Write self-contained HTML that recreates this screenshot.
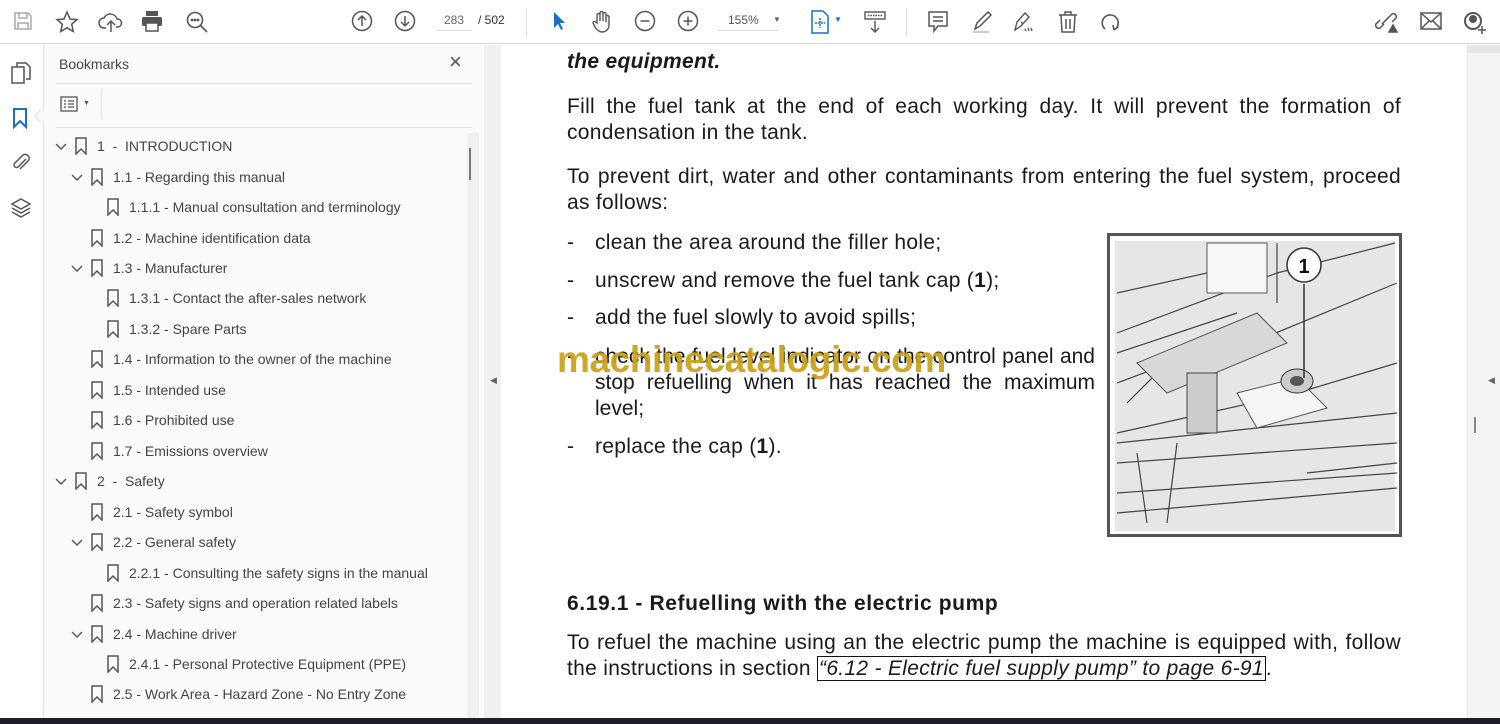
<!DOCTYPE html>
<html><head><meta charset="utf-8"><style>
*{margin:0;padding:0;box-sizing:border-box}
body{width:1500px;height:724px;overflow:hidden;background:#fff;font-family:"Liberation Sans",sans-serif;position:relative}
.tb{position:absolute;left:0;top:0;width:1500px;height:44px;background:#fff;border-bottom:1px solid #d6d6d6}
.ic{position:absolute;top:10px}
.rail{position:absolute;left:0;top:45px;width:44px;height:673px;background:#fff;border-right:1px solid #e2e2e2}
.panel{position:absolute;left:44px;top:45px;width:440px;height:673px;background:#fafafa}
.gap{position:absolute;left:484px;top:45px;width:17px;height:673px;background:#f0f0f0}
.page{position:absolute;left:501px;top:45px;width:966px;height:673px;background:#fff}
.sb{position:absolute;left:1467px;top:45px;width:33px;height:673px;background:#f4f4f4;border-left:1px solid #e6e6e6}
.bottom{position:absolute;left:0;top:718px;width:1500px;height:6px;background:#1e1e2a}
.bm{position:absolute;font-size:14px;color:#444;white-space:nowrap}
.bm svg{position:absolute;left:-23px;top:-1px}
.chev{position:absolute}
.t{position:absolute;left:567px;width:834px;font-size:21px;line-height:26px;color:#1a1a1a;letter-spacing:.3px;white-space:nowrap}
.j{display:block;text-align:justify;text-align-last:justify;white-space:normal}
.li{position:absolute;font-size:21px;line-height:26px;color:#1a1a1a;letter-spacing:.3px}
</style></head><body>
<div class="tb">
<svg class="ic" style="left:12px" width="22" height="22" viewBox="0 0 22 22" fill="none" stroke="#aaa" stroke-width="1.5"><path d="M3 3h13l3 3v13H3z"/><path d="M7 3v5h8V3M6 19v-6h10v6"/></svg>
<svg class="ic" style="left:55px" width="24" height="24" viewBox="0 0 24 24" fill="none" stroke="#555" stroke-width="1.5"><path d="M12 2l3 7 7 .6-5.3 4.6 1.6 7.3L12 17.8 5.7 21.5l1.6-7.3L2 9.6 9 9z"/></svg>
<svg class="ic" style="left:98px" width="26" height="24" viewBox="0 0 26 24" fill="none" stroke="#555" stroke-width="1.5"><path d="M8 18H6a5 5 0 010-10 7 7 0 0113 1 4 4 0 011 8h-2M13 22V11m-4 4l4-4 4 4"/></svg>
<svg class="ic" style="left:141px" width="22" height="22" viewBox="0 0 22 22" fill="#555"><rect x="5" y="1" width="12" height="5"/><rect x="1" y="7" width="20" height="9" rx="2"/><rect x="5" y="13" width="12" height="8" fill="#fff" stroke="#555" stroke-width="1.5"/></svg>
<svg class="ic" style="left:185px" width="24" height="24" viewBox="0 0 24 24" fill="none" stroke="#555" stroke-width="1.6"><circle cx="10" cy="10" r="7.5"/><path d="M15.5 15.5L22 22"/><circle cx="7" cy="10" r=".6" fill="#555"/><circle cx="10" cy="10" r=".6" fill="#555"/><circle cx="13" cy="10" r=".6" fill="#555"/></svg>
<svg class="ic" style="left:351px" width="22" height="22" viewBox="0 0 22 22" fill="none" stroke="#555" stroke-width="1.5"><circle cx="11" cy="11" r="9.5"/><path d="M11 16V6m-4 4l4-4 4 4"/></svg>
<svg class="ic" style="left:394px" width="22" height="22" viewBox="0 0 22 22" fill="none" stroke="#555" stroke-width="1.5"><circle cx="11" cy="11" r="9.5"/><path d="M11 6v10m-4-4l4 4 4-4"/></svg>
<div style="position:absolute;left:436px;top:13px;width:36px;font-size:12px;color:#666;text-align:center;border-bottom:1px solid #ddd;padding-bottom:3px">283</div>
<div style="position:absolute;left:478px;top:13px;font-size:12px;color:#333">/ 502</div>
<div style="position:absolute;left:526px;top:8px;width:1px;height:28px;background:#ddd"></div>
<svg class="ic" style="left:551px" width="16" height="22" viewBox="0 0 16 22"><path d="M3 2v16l4-4 3 6 2-1-3-6h5z" fill="#1a6fc9"/></svg>
<svg class="ic" style="left:590px" width="24" height="24" viewBox="0 0 24 24" fill="none" stroke="#555" stroke-width="1.4"><path d="M7 13V5a1.5 1.5 0 013 0v6V3a1.5 1.5 0 013 0v8V4a1.5 1.5 0 013 0v8V7a1.5 1.5 0 013 0v8c0 4-3 7-7 7-3 0-5-2-7-5l-2-4a1.4 1.4 0 012.5-1z"/></svg>
<svg class="ic" style="left:634px" width="22" height="22" viewBox="0 0 22 22" fill="none" stroke="#555" stroke-width="1.5"><circle cx="11" cy="11" r="9.5"/><path d="M6.5 11h9"/></svg>
<svg class="ic" style="left:677px" width="22" height="22" viewBox="0 0 22 22" fill="none" stroke="#555" stroke-width="1.5"><circle cx="11" cy="11" r="9.5"/><path d="M6.5 11h9M11 6.5v9"/></svg>
<div style="position:absolute;left:718px;top:13px;width:60px;font-size:12px;color:#555;border-bottom:1px solid #ddd;padding-bottom:3px;padding-left:10px">155%</div>
<div style="position:absolute;left:773px;top:15px;font-size:8px;color:#666">▼</div>
<svg class="ic" style="left:810px" width="20" height="24" viewBox="0 0 20 24" fill="none" stroke="#1a6fc9" stroke-width="1.5"><path d="M2 1h11l5 5v17H2z"/><path d="M10 8v10M5 13h10" stroke-dasharray="2 1"/></svg>
<div style="position:absolute;left:834px;top:15px;font-size:8px;color:#1a6fc9">▼</div>
<svg class="ic" style="left:863px" width="24" height="24" viewBox="0 0 24 24" fill="none" stroke="#555" stroke-width="1.4"><rect x="2" y="2" width="20" height="7"/><path d="M5 5.5h14" stroke-dasharray="1.5 1"/><path d="M12 11v11m-4-4l4 4 4-4"/></svg>
<div style="position:absolute;left:906px;top:8px;width:1px;height:28px;background:#ddd"></div>
<svg class="ic" style="left:927px" width="22" height="24" viewBox="0 0 22 24" fill="none" stroke="#555" stroke-width="1.5"><path d="M2 2h18v14h-9l-4 5v-5H2z"/><path d="M6 7h10M6 11h10"/></svg>
<svg class="ic" style="left:970px" width="24" height="24" viewBox="0 0 24 24" fill="none" stroke="#555" stroke-width="1.5"><path d="M5 19l2-6L18 2l3 3L10 16z"/><rect x="3" y="21" width="16" height="2" fill="#ccc" stroke="none"/></svg>
<svg class="ic" style="left:1012px" width="24" height="24" viewBox="0 0 24 24" fill="none" stroke="#555" stroke-width="1.4"><path d="M3 20l2-8 8-9 4 4-8 9zM9 12l2 2M13 19l1 2m2-3l1 3m2-3l1 3"/></svg>
<svg class="ic" style="left:1057px" width="22" height="24" viewBox="0 0 22 24" fill="none" stroke="#555" stroke-width="1.5"><path d="M2 5h18M8 5V2h6v3M4 5l1 17h12l1-17M9 9v10M13 9v10"/></svg>
<svg class="ic" style="left:1098px" width="24" height="24" viewBox="0 0 24 24" fill="none" stroke="#555" stroke-width="1.6"><path d="M16 20a8 8 0 10-9-1M16 20l-1-5m1 5l4-3"/></svg>
<svg class="ic" style="left:1374px" width="26" height="24" viewBox="0 0 26 24" fill="none" stroke="#555" stroke-width="1.5"><path d="M10 14l-4 4a3 3 0 01-4-4l4-4M14 8l4-4a3 3 0 014 4l-4 4M8 14l6-6"/><path d="M15 22l4-7 4 7z" fill="#555"/></svg>
<svg class="ic" style="left:1419px" width="24" height="22" viewBox="0 0 24 22" fill="none" stroke="#555" stroke-width="1.5"><rect x="2" y="3" width="20" height="16"/><path d="M2 3l10 9 10-9M2 19l8-8m12 8l-8-8"/></svg>
<svg class="ic" style="left:1462px" width="26" height="26" viewBox="0 0 26 26" fill="none" stroke="#555" stroke-width="2"><circle cx="11" cy="11" r="8"/><circle cx="11" cy="9" r="3" fill="#555"/><path d="M20 16v8M16 20h8" stroke-width="1.5"/></svg>
</div>

<div class="rail">
<svg style="position:absolute;left:10px;top:16px" width="22" height="24" viewBox="0 0 22 24" fill="none" stroke="#555" stroke-width="1.5"><path d="M7 6V2h9l4 4v12h-4M2 6h12v16H2z"/></svg>
<svg style="position:absolute;left:12px;top:62px" width="16" height="22" viewBox="0 0 16 22" fill="none" stroke="#1a6fc9" stroke-width="2"><path d="M2 2h12v18l-6-6-6 6z"/></svg>
<div style="position:absolute;left:36px;top:66px;width:10px;height:10px;background:#fafafa;border-left:1px solid #e2e2e2;border-bottom:1px solid #e2e2e2;transform:rotate(45deg)"></div>
<svg style="position:absolute;left:10px;top:106px" width="22" height="24" viewBox="0 0 22 24" fill="none" stroke="#555" stroke-width="1.5"><path d="M16 8l-8 8a2.5 2.5 0 01-3.5-3.5L13 4a4 4 0 015.5 5.5L10 18"/></svg>
<svg style="position:absolute;left:10px;top:152px" width="22" height="22" viewBox="0 0 22 22" fill="none" stroke="#555" stroke-width="1.5"><path d="M11 2l9 5-9 5-9-5zM2 11l9 5 9-5M2 15l9 5 9-5"/></svg>
</div>

<div class="panel">
<div style="position:absolute;left:15px;top:11px;font-size:14px;color:#444">Bookmarks</div>
<div style="position:absolute;left:405px;top:4px;font-size:22px;color:#555">×</div>
<div style="position:absolute;left:12px;top:38px;width:416px;height:1px;background:#e0e0e0"></div>
<svg style="position:absolute;left:16px;top:51px" width="18" height="16" viewBox="0 0 18 16" fill="none" stroke="#555" stroke-width="1.3"><rect x="1" y="1" width="16" height="14"/><path d="M4 5h2M8 5h6M4 8h2M8 8h6M4 11h2M8 11h6"/></svg>
<div style="position:absolute;left:39px;top:55px;font-size:7px;color:#555">▼</div>
<div style="position:absolute;left:57px;top:44px;width:1px;height:30px;background:#ddd"></div>
<div style="position:absolute;left:12px;top:82px;width:416px;height:1px;background:#e0e0e0"></div>
<div style="position:absolute;left:423px;top:88px;width:12px;height:585px;background:#f0f0f0"></div>
<div style="position:absolute;left:425px;top:103px;width:2px;height:32px;background:#777"></div>
</div>
<div class="gap"><div style="position:absolute;left:6px;top:330px;font-size:9px;color:#666">◀</div></div>

<div class="page"></div>
<div class="t" style="top:49px;font-weight:bold;font-style:italic">the equipment.</div>
<div class="t" style="top:94px"><span class="j">Fill the fuel tank at the end of each working day. It will prevent the formation of</span>condensation in the tank.</div>
<div class="t" style="top:164px"><span class="j">To prevent dirt, water and other contaminants from entering the fuel system, proceed</span>as follows:</div>
<div class="li" style="left:567px;top:230px">-</div><div class="li" style="left:595px;top:230px">clean the area around the filler hole;</div>
<div class="li" style="left:567px;top:268px">-</div><div class="li" style="left:595px;top:268px">unscrew and remove the fuel tank cap (<b>1</b>);</div>
<div class="li" style="left:567px;top:305px">-</div><div class="li" style="left:595px;top:305px">add the fuel slowly to avoid spills;</div>
<div class="li" style="left:567px;top:344px">-</div><div class="li" style="left:595px;top:344px;width:500px;text-align:justify;text-align-last:left;letter-spacing:0">check the fuel level indicator on the control panel and stop refuelling when it has reached the maximum level;</div>
<div class="li" style="left:567px;top:434px">-</div><div class="li" style="left:595px;top:434px">replace the cap (<b>1</b>).</div>
<div style="position:absolute;left:557px;top:339px;font-size:37px;font-weight:bold;color:#c9a018;opacity:.92;white-space:nowrap;letter-spacing:-.4px">machinecatalogic.com</div>
<div class="li" style="left:567px;top:591px;font-weight:bold;font-size:21px;letter-spacing:.6px">6.19.1 - Refuelling with the electric pump</div>
<div class="t" style="top:630px"><span class="j">To refuel the machine using an the electric pump the machine is equipped with, follow</span>the instructions in section <i style="border:1px solid #111;padding:0 1px">“6.12 - Electric fuel supply pump” to page 6-91</i>.</div>

<svg style="position:absolute;left:1107px;top:233px" width="295" height="304" viewBox="0 0 295 304">
<rect x="1.5" y="1.5" width="292" height="301" fill="#fff" stroke="#555" stroke-width="3"/>
<rect x="8" y="8" width="280" height="290" fill="#e6e6e6"/>
<path d="M10 60l90-20 20-30M10 100l160-60 118-30M10 150l80-30 30 0 170-70M10 200l180-40 100-30M20 170l40-40M10 230l280-20M10 260l280-20M10 280l280-25M30 220l10 70M100 150l10 50M10 120l120-40M170 10v60M10 210l280-30M60 290l10-80M200 240l90-10" stroke="#444" fill="none" stroke-width="1.2"/>
<path d="M100 10h60v50h-60z" fill="#f7f7f7" stroke="#555"/>
<path d="M30 130l120-50 30 30-120 50z" fill="#d8d8d8" stroke="#555"/>
<path d="M130 160l60-15 30 30-70 20z" fill="#f5f5f5" stroke="#555"/>
<ellipse cx="190" cy="148" rx="16" ry="12" fill="#ccc" stroke="#333"/>
<ellipse cx="190" cy="148" rx="7" ry="5" fill="#555"/>
<path d="M80 140h30v60H80z" fill="#ccc" stroke="#444"/>
<line x1="197" y1="51" x2="197" y2="145" stroke="#333" stroke-width="1.5"/>
<circle cx="197" cy="32" r="17" fill="#fff" stroke="#333" stroke-width="1.5"/>
<text x="197" y="40" font-family="Liberation Sans,sans-serif" font-size="20" font-weight="bold" text-anchor="middle" fill="#111">1</text>
</svg>

<div class="sb"><div style="position:absolute;left:0;top:0;width:32px;height:8px;background:#e6e6e6"></div>
<div style="position:absolute;left:20px;top:330px;font-size:9px;color:#666">◀</div>
<div style="position:absolute;left:6px;top:372px;width:2px;height:16px;background:#888"></div></div>
<div class="bottom"></div>

<svg class="chev" style="left:55px;top:142px" width="12" height="10" viewBox="0 0 12 10" fill="none" stroke="#555" stroke-width="1.4"><path d="M1 2l5 5 5-5"/></svg><div class="bm" style="left:97px;top:138px"><svg width="14" height="18" viewBox="0 0 14 18" fill="none" stroke="#555" stroke-width="1.5"><path d="M2 1h10v16l-5-5-5 5z"/></svg>1&nbsp; -&nbsp; INTRODUCTION</div>
<svg class="chev" style="left:71px;top:173px" width="12" height="10" viewBox="0 0 12 10" fill="none" stroke="#555" stroke-width="1.4"><path d="M1 2l5 5 5-5"/></svg><div class="bm" style="left:113px;top:169px"><svg width="14" height="18" viewBox="0 0 14 18" fill="none" stroke="#555" stroke-width="1.5"><path d="M2 1h10v16l-5-5-5 5z"/></svg>1.1 - Regarding this manual</div>
<div class="bm" style="left:129px;top:199px"><svg width="14" height="18" viewBox="0 0 14 18" fill="none" stroke="#555" stroke-width="1.5"><path d="M2 1h10v16l-5-5-5 5z"/></svg>1.1.1 - Manual consultation and terminology</div>
<div class="bm" style="left:113px;top:230px"><svg width="14" height="18" viewBox="0 0 14 18" fill="none" stroke="#555" stroke-width="1.5"><path d="M2 1h10v16l-5-5-5 5z"/></svg>1.2 - Machine identification data</div>
<svg class="chev" style="left:71px;top:264px" width="12" height="10" viewBox="0 0 12 10" fill="none" stroke="#555" stroke-width="1.4"><path d="M1 2l5 5 5-5"/></svg><div class="bm" style="left:113px;top:260px"><svg width="14" height="18" viewBox="0 0 14 18" fill="none" stroke="#555" stroke-width="1.5"><path d="M2 1h10v16l-5-5-5 5z"/></svg>1.3 - Manufacturer</div>
<div class="bm" style="left:129px;top:290px"><svg width="14" height="18" viewBox="0 0 14 18" fill="none" stroke="#555" stroke-width="1.5"><path d="M2 1h10v16l-5-5-5 5z"/></svg>1.3.1 - Contact the after-sales network</div>
<div class="bm" style="left:129px;top:321px"><svg width="14" height="18" viewBox="0 0 14 18" fill="none" stroke="#555" stroke-width="1.5"><path d="M2 1h10v16l-5-5-5 5z"/></svg>1.3.2 - Spare Parts</div>
<div class="bm" style="left:113px;top:351px"><svg width="14" height="18" viewBox="0 0 14 18" fill="none" stroke="#555" stroke-width="1.5"><path d="M2 1h10v16l-5-5-5 5z"/></svg>1.4 - Information to the owner of the machine</div>
<div class="bm" style="left:113px;top:382px"><svg width="14" height="18" viewBox="0 0 14 18" fill="none" stroke="#555" stroke-width="1.5"><path d="M2 1h10v16l-5-5-5 5z"/></svg>1.5 - Intended use</div>
<div class="bm" style="left:113px;top:412px"><svg width="14" height="18" viewBox="0 0 14 18" fill="none" stroke="#555" stroke-width="1.5"><path d="M2 1h10v16l-5-5-5 5z"/></svg>1.6 - Prohibited use</div>
<div class="bm" style="left:113px;top:443px"><svg width="14" height="18" viewBox="0 0 14 18" fill="none" stroke="#555" stroke-width="1.5"><path d="M2 1h10v16l-5-5-5 5z"/></svg>1.7 - Emissions overview</div>
<svg class="chev" style="left:55px;top:477px" width="12" height="10" viewBox="0 0 12 10" fill="none" stroke="#555" stroke-width="1.4"><path d="M1 2l5 5 5-5"/></svg><div class="bm" style="left:97px;top:473px"><svg width="14" height="18" viewBox="0 0 14 18" fill="none" stroke="#555" stroke-width="1.5"><path d="M2 1h10v16l-5-5-5 5z"/></svg>2&nbsp; -&nbsp; Safety</div>
<div class="bm" style="left:113px;top:504px"><svg width="14" height="18" viewBox="0 0 14 18" fill="none" stroke="#555" stroke-width="1.5"><path d="M2 1h10v16l-5-5-5 5z"/></svg>2.1 - Safety symbol</div>
<svg class="chev" style="left:71px;top:538px" width="12" height="10" viewBox="0 0 12 10" fill="none" stroke="#555" stroke-width="1.4"><path d="M1 2l5 5 5-5"/></svg><div class="bm" style="left:113px;top:534px"><svg width="14" height="18" viewBox="0 0 14 18" fill="none" stroke="#555" stroke-width="1.5"><path d="M2 1h10v16l-5-5-5 5z"/></svg>2.2 - General safety</div>
<div class="bm" style="left:129px;top:565px"><svg width="14" height="18" viewBox="0 0 14 18" fill="none" stroke="#555" stroke-width="1.5"><path d="M2 1h10v16l-5-5-5 5z"/></svg>2.2.1 - Consulting the safety signs in the manual</div>
<div class="bm" style="left:113px;top:595px"><svg width="14" height="18" viewBox="0 0 14 18" fill="none" stroke="#555" stroke-width="1.5"><path d="M2 1h10v16l-5-5-5 5z"/></svg>2.3 - Safety signs and operation related labels</div>
<svg class="chev" style="left:71px;top:630px" width="12" height="10" viewBox="0 0 12 10" fill="none" stroke="#555" stroke-width="1.4"><path d="M1 2l5 5 5-5"/></svg><div class="bm" style="left:113px;top:626px"><svg width="14" height="18" viewBox="0 0 14 18" fill="none" stroke="#555" stroke-width="1.5"><path d="M2 1h10v16l-5-5-5 5z"/></svg>2.4 - Machine driver</div>
<div class="bm" style="left:129px;top:656px"><svg width="14" height="18" viewBox="0 0 14 18" fill="none" stroke="#555" stroke-width="1.5"><path d="M2 1h10v16l-5-5-5 5z"/></svg>2.4.1 - Personal Protective Equipment (PPE)</div>
<div class="bm" style="left:113px;top:686px"><svg width="14" height="18" viewBox="0 0 14 18" fill="none" stroke="#555" stroke-width="1.5"><path d="M2 1h10v16l-5-5-5 5z"/></svg>2.5 - Work Area - Hazard Zone - No Entry Zone</div>
</body></html>
